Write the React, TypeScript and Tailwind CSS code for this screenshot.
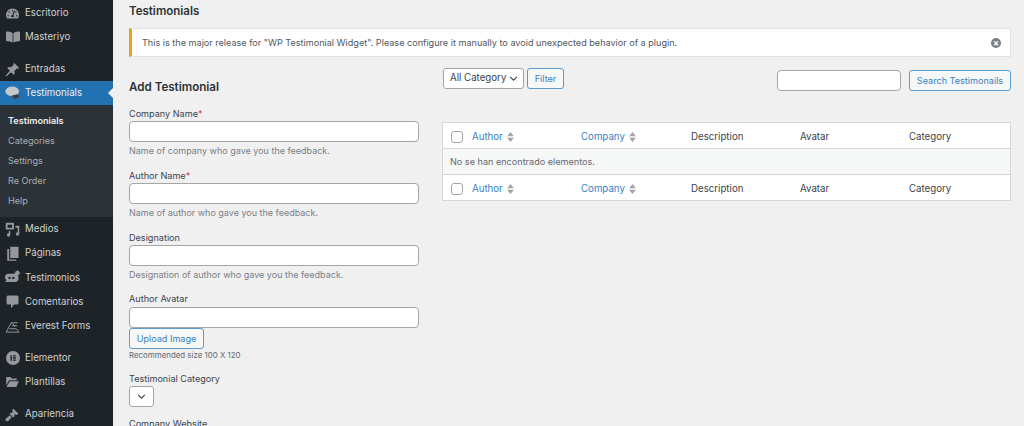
import { ReactNode } from 'react';
import { FaBookOpen, FaTachometerAlt } from 'react-icons/fa';

const MediaIcon = () => (
  <svg viewBox="0 0 20 20" className="h-[15px] w-[15px]" fill="currentColor">
    <path d="M1 1h11v9H1z M3.500 3.500v4h6v-4z" fillRule="evenodd" />
    <path d="M14 5h5v11a2.300 2.300 0 1 1-2-2.200V7.500h-3z" />
    <path d="M5 12h2v5.200A2.300 2.300 0 1 1 5 15z" />
  </svg>
);

const BubbleIcon = () => (
  <svg viewBox="0 0 20 20" className="h-[16px] w-[16px]">
    <ellipse cx="9" cy="8" rx="8.500" ry="6" fill="#c5c8cb" />
    <path d="M8 13.500l7-2 3.500 2.500-6 4z" fill="#3b3f44" />
  </svg>
);

const PinIcon = () => (
  <svg viewBox="0 0 20 20" className="h-[15px] w-[15px]" fill="currentColor">
    <path d="M12 1l7 7-2 1-1-.5-3.500 3.500.5 3.500-1.500 1.500-3.500-3.500L2 19l-1 0 0-1 5.500-6.500L3 8l1.500-1.500 3.500.5 3.500-3.500L11.500 2.500z" />
  </svg>
);

const PagesIcon = () => (
  <svg viewBox="0 0 20 20" className="h-[15px] w-[15px]" fill="currentColor">
    <path d="M7 1h11v15H7z" />
    <path d="M3 4h2.500v14H15v1.500H3z" />
  </svg>
);

const ChatGearIcon = () => (
  <svg viewBox="0 0 22 20" className="h-[15px] w-[17px]" fill="currentColor">
    <path d="M6 5h8a5 5 0 0 1 5 5v1a5 5 0 0 1-5 5H1l2-2.500A5 5 0 0 1 1 10a5 5 0 0 1 5-5z" />
    <circle cx="7" cy="10.500" r="1.600" fill="#1d2327" />
    <circle cx="12" cy="10.500" r="1.600" fill="#1d2327" />
    <circle cx="17.500" cy="4" r="3" />
    <path d="M17 0h1v8h-1zM13.500 3.500h8v1h-8z" />
  </svg>
);

const CommentIcon = () => (
  <svg viewBox="0 0 20 20" className="h-[15px] w-[15px]" fill="currentColor">
    <path d="M4 2h12a2 2 0 0 1 2 2v8a2 2 0 0 1-2 2h-4l-4 5v-5H4a2 2 0 0 1-2-2V4a2 2 0 0 1 2-2z" />
  </svg>
);

const FormsIcon = () => (
  <svg viewBox="0 0 20 20" className="h-[15px] w-[15px]" fill="none" stroke="currentColor" strokeWidth="1.300">
    <path d="M1.500 17.500L9 4l4 6" />
    <path d="M1.500 17.500h17L15 13H6" />
    <path d="M9 9h7M11 5h6" />
  </svg>
);

const ElementorIcon = () => (
  <svg viewBox="0 0 20 20" className="h-[14px] w-[14px]">
    <circle cx="10" cy="10" r="10" fill="currentColor" />
    <path d="M6.500 6h2v8h-2zM10 6h4v1.800h-4zM10 9.100h4v1.800h-4zM10 12.200h4V14h-4z" fill="#1d2327" />
  </svg>
);

const FolderIcon = () => (
  <svg viewBox="0 0 20 20" className="h-[14px] w-[15px]" fill="currentColor">
    <path d="M1 3h6l2 2h7v2.500H5L1 15z" />
    <path d="M6 9h13l-3.500 8H1.500z" />
  </svg>
);

const BrushIcon = () => (
  <svg viewBox="0 0 20 20" className="h-[15px] w-[15px]" fill="currentColor">
    <path d="M11 2l7 7-3 1.500-1.500-1L12 11l1 1-2 2-5-5 2-2 1 1 1.500-1.500-1-1.500z" />
    <path d="M6.500 11l2.500 2.500L4 19l-3-.5L.5 16z" />
  </svg>
);

type MenuItem = { label: string; icon: ReactNode; gap?: boolean };

const topItems: MenuItem[] = [
  { label: 'Escritorio', icon: <FaTachometerAlt size={13} /> },
  { label: 'Masteriyo', icon: <FaBookOpen size={14} /> },
  { label: 'Entradas', icon: <PinIcon />, gap: true },
];

const bottomItems: MenuItem[] = [
  { label: 'Medios', icon: <MediaIcon /> },
  { label: 'Páginas', icon: <PagesIcon /> },
  { label: 'Testimonios', icon: <ChatGearIcon /> },
  { label: 'Comentarios', icon: <CommentIcon /> },
  { label: 'Everest Forms', icon: <FormsIcon /> },
  { label: 'Elementor', icon: <ElementorIcon />, gap: true },
  { label: 'Plantillas', icon: <FolderIcon /> },
  { label: 'Apariencia', icon: <BrushIcon />, gap: true },
];

const subItems = ['Categories', 'Settings', 'Re Order', 'Help'];

function SideItem({ item }: { item: MenuItem }) {
  return (
    <div className={`flex h-[24.15px] items-center text-[9.7px] text-[#cfd1d3] ${item.gap ? 'mt-[8px]' : ''}`}>
      <span className="flex w-[25px] shrink-0 justify-center text-[#94989c]">{item.icon}</span>
      {item.label}
    </div>
  );
}

function Sidebar() {
  return (
    <aside className="h-full w-[113px] shrink-0 overflow-hidden bg-[#1d2327] pt-[1px]">
      {topItems.map((item) => (
        <SideItem key={item.label} item={item} />
      ))}
      <div className="relative flex h-[24px] items-center bg-[#2271b1] text-[9.7px] text-[#e8eef3]">
        <span className="flex w-[25px] shrink-0 justify-center">
          <BubbleIcon />
        </span>
        Testimonials
        <span className="absolute right-0 top-[7px] h-0 w-0 border-y-[5.5px] border-r-[5.5px] border-y-transparent border-r-[#f0f0f1]" />
      </div>
      <div className="h-[112px] bg-[#2c3338] pt-[5px] text-[9.1px] text-[#a9aeb2]">
        <div className="flex h-[20px] items-center pl-[8px] font-semibold text-[#eceded]">Testimonials</div>
        {subItems.map((s) => (
          <div key={s} className="flex h-[20px] items-center pl-[8px]">
            {s}
          </div>
        ))}
      </div>
      {bottomItems.map((item) => (
        <SideItem key={item.label} item={item} />
      ))}
    </aside>
  );
}

function Chevron() {
  return (
    <svg viewBox="0 0 10 6" className="h-[5px] w-[9px]" fill="none" stroke="#3c434a" strokeWidth="1.300">
      <path d="M1 1l4 4 4-4" />
    </svg>
  );
}

function TextField() {
  return <div className="h-[21px] w-[290px] rounded-[4px] border border-[#a3a5a9] bg-white" />;
}

function Field({ label, required, help }: { label: string; required?: boolean; help: string }) {
  return (
    <div className="h-[62px]">
      <div className="flex h-[16px] items-center pt-[2px] text-[9.1px] text-[#3c434a]">
        {label}
        {required && <span className="text-[#d63638]">*</span>}
      </div>
      <TextField />
      <p className="mt-[2px] flex h-[14px] items-center text-[9px] text-[#7a7f84]">{help}</p>
    </div>
  );
}

function AddForm() {
  return (
    <section className="w-[290px] shrink-0">
      <h2 className="mt-[1px] flex h-[18px] items-center text-[11.6px] font-semibold text-[#2c3338]">Add Testimonial</h2>
      <div className="mt-[8px]">
        <Field label="Company Name" required help="Name of company who gave you the feedback." />
        <Field label="Author Name" required help="Name of author who gave you the feedback." />
        <Field label="Designation" help="Designation of author who gave you the feedback." />
        <div className="flex h-[16px] items-center text-[9.1px] text-[#3c434a]">Author Avatar</div>
        <TextField />
        <button className="flex h-[21px] w-[75px] items-center justify-center rounded-[3px] border border-[#5a9bd0] bg-[#f6f7f7] text-[9.1px] text-[#3582c4]">
          Upload Image
        </button>
        <p className="mt-[1px] flex h-[12px] items-center text-[7.9px] text-[#646970]">Recommended size 100 X 120</p>
        <div className="mt-[8px] flex h-[16px] items-center pt-[2px] text-[9.1px] text-[#3c434a]">Testimonial Category</div>
        <div className="flex h-[21px] w-[25px] items-center justify-center rounded-[3px] border border-[#a3a5a9] bg-white">
          <Chevron />
        </div>
        <div className="mt-[10px] text-[9.1px] text-[#3c434a]">Company Website</div>
      </div>
    </section>
  );
}

function SortArrows() {
  return (
    <svg viewBox="0 0 8 12" className="ml-[4px] h-[10px] w-[7px]" fill="#a0a4a8">
      <path d="M4 0l4 5H0zM4 12L0 7h8z" />
    </svg>
  );
}

function HeadRow({ border }: { border: string }) {
  return (
    <div className={`grid h-[26px] grid-cols-[29px_109px_110px_109px_109px_1fr] items-center bg-white pt-[3px] text-[9.7px] ${border}`}>
      <span className="ml-[8px] h-[12px] w-[12px] rounded-[3px] border border-[#a3a5a9] bg-white" />
      <span className="flex items-center text-[#3582c4]">
        Author
        <SortArrows />
      </span>
      <span className="flex items-center text-[#3582c4]">
        Company
        <SortArrows />
      </span>
      <span className="text-[#3c434a]">Description</span>
      <span className="text-[#3c434a]">Avatar</span>
      <span className="text-[#3c434a]">Category</span>
    </div>
  );
}

function ListPanel() {
  return (
    <section className="ml-[23px] min-w-0 flex-1">
      <div className="flex h-[23px] items-start justify-between">
        <div className="flex gap-[3px] pl-[1px]">
          <div className="flex h-[21px] w-[81px] items-center justify-between whitespace-nowrap rounded-[3px] border border-[#a3a5a9] bg-white pl-[6px] pr-[5px] text-[9.7px] text-[#3c434a]">
            All Category
            <Chevron />
          </div>
          <button className="flex h-[21px] w-[37px] items-center justify-center rounded-[3px] border border-[#5a9bd0] bg-[#f6f7f7] text-[9.1px] text-[#3582c4]">
            Filter
          </button>
        </div>
        <div className="mt-[2px] flex gap-[8px]">
          <div className="h-[21px] w-[124px] rounded-[4px] border border-[#a3a5a9] bg-white" />
          <button className="flex h-[21px] w-[102px] items-center justify-center rounded-[3px] border border-[#5a9bd0] bg-[#f6f7f7] text-[9.1px] text-[#3582c4]">
            Search Testimonails
          </button>
        </div>
      </div>
      <div className="mt-[31px] border border-[#d5d6d8] bg-white">
        <HeadRow border="border-b border-[#d5d6d8]" />
        <div className="flex h-[25px] items-center bg-[#f6f7f7] pl-[7px] text-[9.1px] text-[#646970]">
          No se han encontrado elementos.
        </div>
        <HeadRow border="border-t border-[#d5d6d8]" />
      </div>
    </section>
  );
}

export default function App() {
  return (
    <div
      className="flex h-[426px] w-[1024px] overflow-hidden bg-[#f0f0f1]"
      style={{ fontFamily: 'Inter, "Liberation Sans", sans-serif' }}
    >
      <Sidebar />
      <main className="min-w-0 flex-1 pl-[16px] pr-[13px]">
        <h1 className="flex h-[22px] items-center pt-[1px] text-[11.5px] font-semibold text-[#2c3338]">Testimonials</h1>
        <div className="mt-[6px] flex h-[29px] items-center justify-between border border-l-[3px] border-[#e2e2e4] border-l-[#dba617] bg-white pl-[10px] pr-[9px] text-[9.1px] text-[#50575e]">
          <span>This is the major release for "WP Testimonial Widget". Please configure it manually to avoid unexpected behavior of a plugin.</span>
          <span className="flex h-[10px] w-[10px] items-center justify-center rounded-full bg-[#7a7f84] text-[9px] leading-none font-bold text-white">×</span>
        </div>
        <div className="mt-[11px] flex">
          <div className="mt-[10px]">
            <AddForm />
          </div>
          <ListPanel />
        </div>
      </main>
    </div>
  );
}
